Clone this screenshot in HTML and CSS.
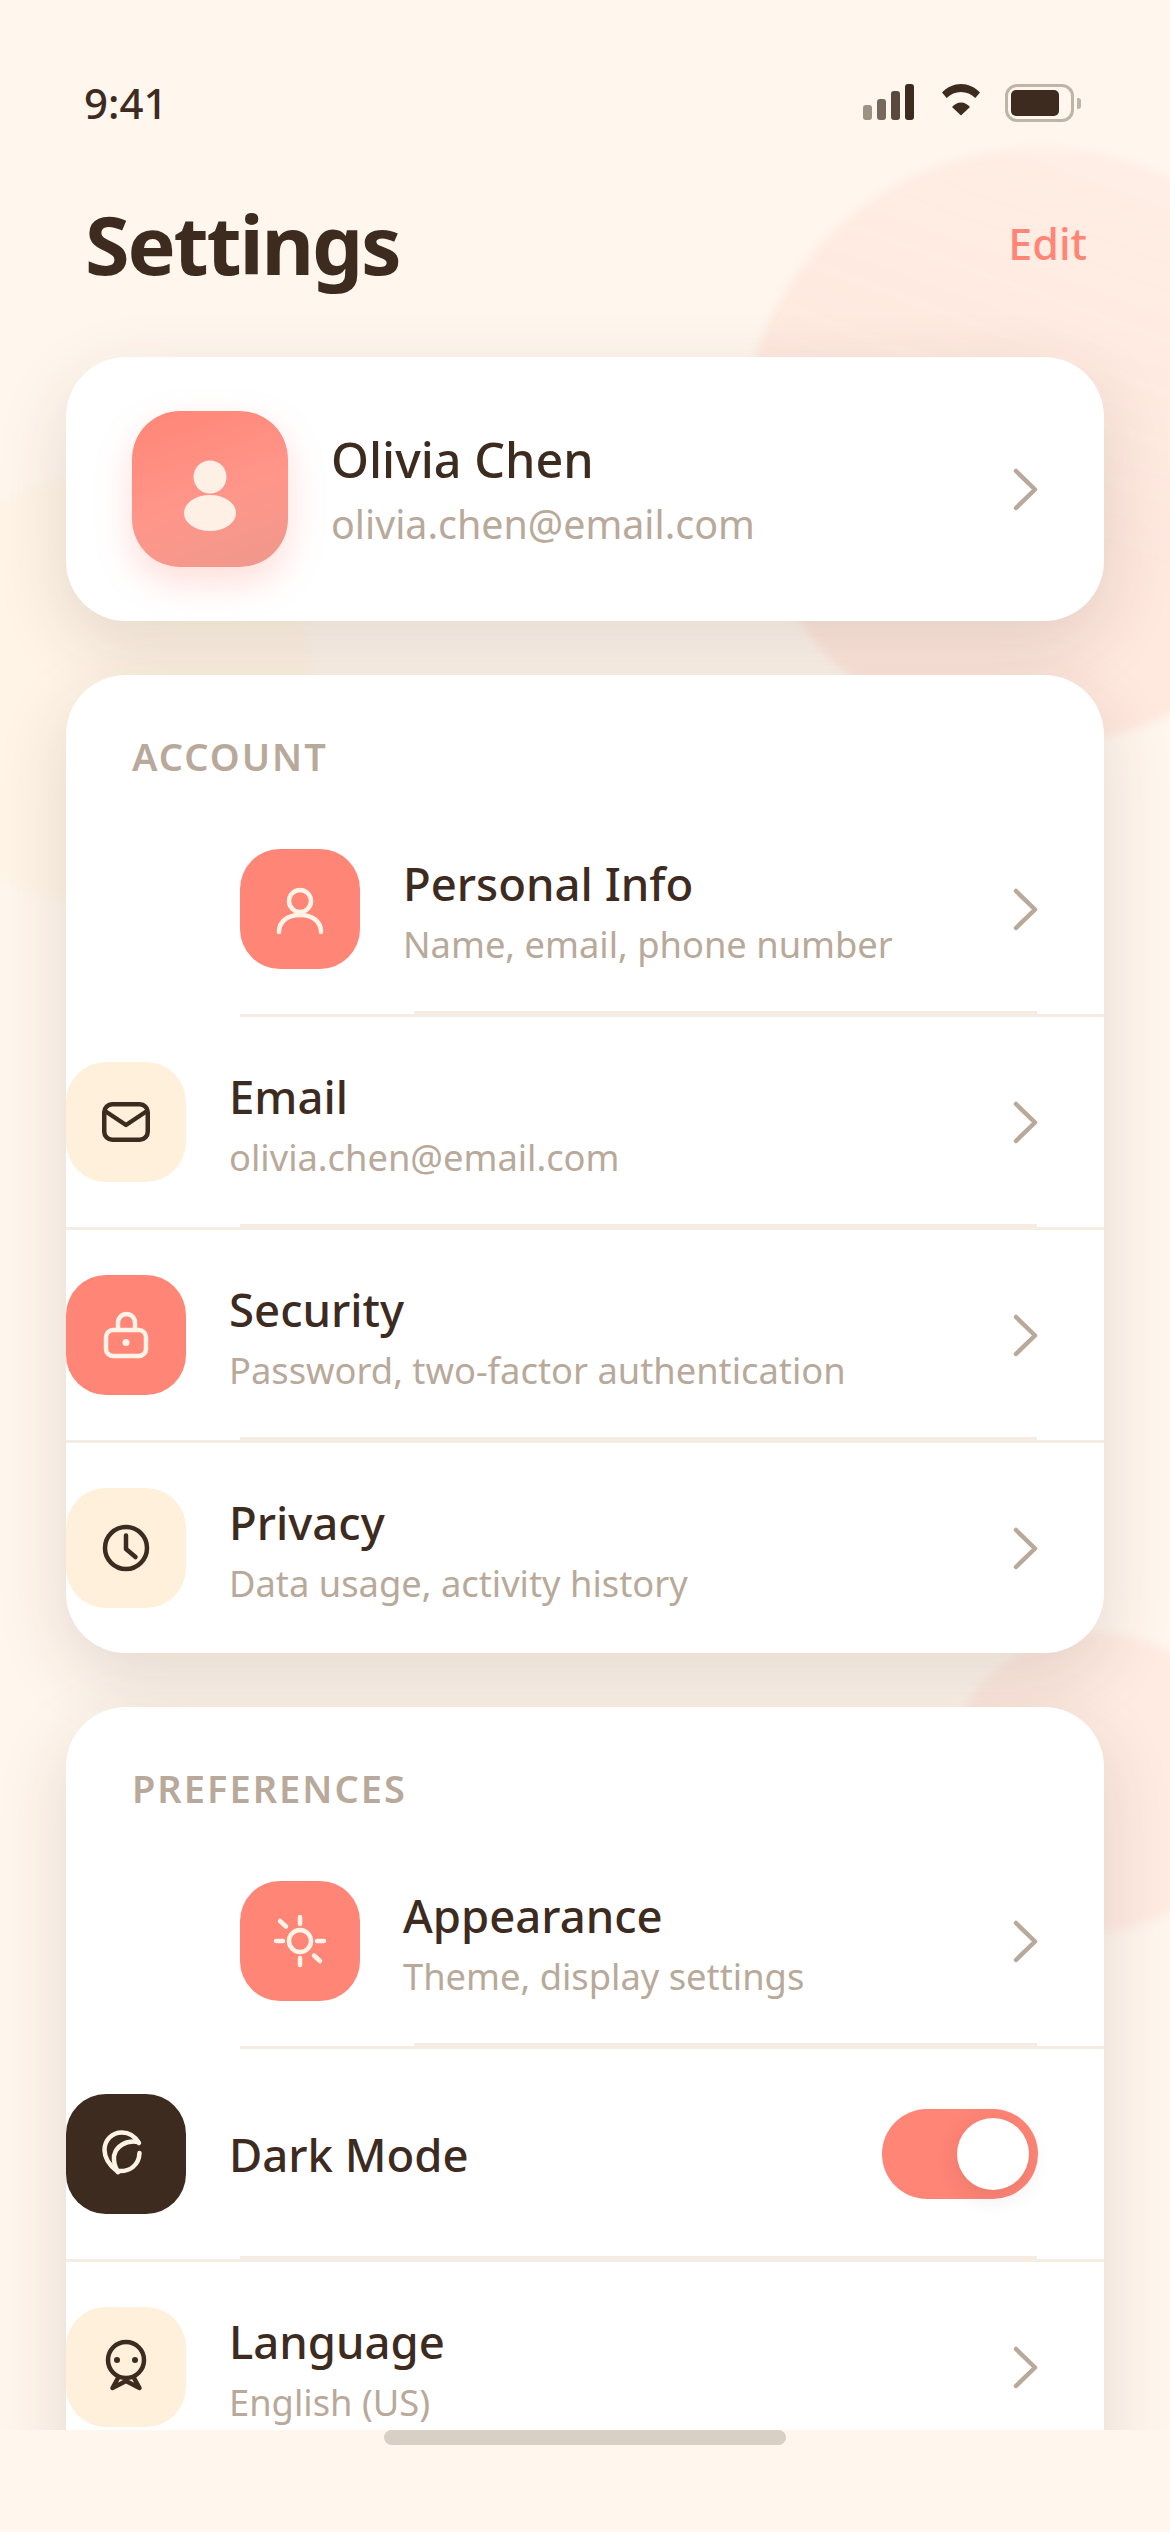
FILE: index.html
```html
<!DOCTYPE html>
<html lang="en">
<head>
<meta charset="utf-8">
<title>Settings</title>
<link rel="stylesheet" href="styles.css">
</head>
<body>
<div class="screen">
  <div class="blob blob-pink"></div>
  <div class="blob blob-yellow"></div>
  <div class="blob blob-pink-low"></div>

  <div class="scroll">
    <div class="status">
      <span class="time">9:41</span>
      <div class="status-icons">
        <div class="signal">
          <i class="bar bar1"></i><i class="bar bar2"></i><i class="bar bar3"></i><i class="bar bar4"></i>
        </div>
        <svg class="wifi" width="38" height="32" viewBox="0 0 38 32"><path d="M0 8.500C5.500 2.900 12 0 19 0s13.500 2.900 19 8.500l-4.700 5.600C29.300 10 24.500 8 19 8S8.700 10 4.700 14.100Z" fill="#3d2b1f"/><path d="M10 23C12.500 20.300 15.500 18.500 19 18.500S25.500 20.300 28 23L19 31.500Z" fill="#3d2b1f"/></svg>
        <div class="battery"><div class="battery-body"><div class="battery-fill"></div></div><div class="battery-cap"></div></div>
      </div>
    </div>

    <header class="head">
      <h1 class="page-title">Settings</h1>
      <span class="edit">Edit</span>
    </header>

    <section class="card profile">
      <div class="avatar">
        <svg width="156" height="156" viewBox="0 0 156 156"><circle cx="78" cy="66" r="16.500" fill="#fff0e6"/><ellipse cx="78" cy="102" rx="26" ry="18" fill="#fff0e6"/></svg>
      </div>
      <div class="texts">
        <div class="name">Olivia Chen</div>
        <div class="mail">olivia.chen@email.com</div>
      </div>
      <svg class="chev" width="27" height="43" viewBox="0 0 27 43"><path d="M4 3L23 21.500L4 40" /></svg>
    </section>

    <section class="card group">
      <h2 class="group-title">ACCOUNT</h2>
      <div class="row row-first">
        <div class="tile coral"><svg class="glyph light" width="72" height="72" viewBox="0 0 72 72"><circle cx="36" cy="28" r="11"/><path d="M15 59C15 48 24 42 36 42S57 48 57 59"/></svg></div>
        <div class="texts"><div class="title">Personal Info</div><div class="sub">Name, email, phone number</div></div>
        <svg class="chev" width="27" height="43" viewBox="0 0 27 43"><path d="M4 3L23 21.500L4 40" /></svg>
      </div>
      <div class="row">
        <div class="tile cream"><svg class="glyph dark" width="72" height="72" viewBox="0 0 72 72"><rect x="14.250" y="18.250" width="43.500" height="35.500" rx="8"/><path d="M15 25L36 39L57 25"/></svg></div>
        <div class="texts"><div class="title">Email</div><div class="sub">olivia.chen@email.com</div></div>
        <svg class="chev" width="27" height="43" viewBox="0 0 27 43"><path d="M4 3L23 21.500L4 40" /></svg>
      </div>
      <div class="row">
        <div class="tile coral"><svg class="glyph light" width="72" height="72" viewBox="0 0 72 72"><rect x="16" y="31" width="40" height="26" rx="7"/><path d="M28 31V23.500A8.500 8.500 0 0 1 45 23.500V31"/><circle class="dot" cx="36" cy="43.500" r="3.500"/></svg></div>
        <div class="texts"><div class="title">Security</div><div class="sub">Password, two-factor authentication</div></div>
        <svg class="chev" width="27" height="43" viewBox="0 0 27 43"><path d="M4 3L23 21.500L4 40" /></svg>
      </div>
      <div class="row row-last">
        <div class="tile cream"><svg class="glyph dark" width="72" height="72" viewBox="0 0 72 72"><circle cx="36" cy="36" r="21"/><path d="M36 23.500V37L45.500 45"/></svg></div>
        <div class="texts"><div class="title">Privacy</div><div class="sub">Data usage, activity history</div></div>
        <svg class="chev" width="27" height="43" viewBox="0 0 27 43"><path d="M4 3L23 21.500L4 40" /></svg>
      </div>
    </section>

    <section class="card group group-clipped">
      <h2 class="group-title">PREFERENCES</h2>
      <div class="row row-first">
        <div class="tile coral"><svg class="glyph light" width="72" height="72" viewBox="0 0 72 72"><circle cx="36" cy="36" r="11"/><path d="M36 12V19M36 53V60M12 36H19M53 36H60M16 16L22 21.500M50 50.500L56 56"/></svg></div>
        <div class="texts"><div class="title">Appearance</div><div class="sub">Theme, display settings</div></div>
        <svg class="chev" width="27" height="43" viewBox="0 0 27 43"><path d="M4 3L23 21.500L4 40" /></svg>
      </div>
      <div class="row">
        <div class="tile ink"><svg class="glyph light" width="72" height="72" viewBox="0 0 72 72"><path d="M49 25C44 17 38 14.500 32 14.500C22 14.500 14.500 22 14.500 32C14.500 41 20 48 28 54"/><path d="M48 24C36 22 26 28 24 38C23.500 44 25 49 28 54"/><path d="M28 53C40 54 49 47 49.500 35"/></svg></div>
        <div class="texts"><div class="title">Dark Mode</div></div>
        <div class="toggle"><div class="knob"></div></div>
      </div>
      <div class="row row-last">
        <div class="tile cream"><svg class="glyph dark" width="72" height="72" viewBox="0 0 72 72"><circle cx="36" cy="29" r="18"/><circle class="dot" cx="27" cy="29" r="3"/><circle class="dot" cx="45" cy="29" r="3"/><path d="M28 47L22.500 57L36 50L49.500 57L44 47"/></svg></div>
        <div class="texts"><div class="title">Language</div><div class="sub">English (US)</div></div>
        <svg class="chev" width="27" height="43" viewBox="0 0 27 43"><path d="M4 3L23 21.500L4 40" /></svg>
      </div>
    </section>
  </div>

  <footer class="home-bar"><div class="home-indicator"></div></footer>
</div>
</body>
</html>
```

FILE: styles.css
```css
* { box-sizing: border-box; }
html, body { margin: 0; padding: 0; }
body { font-family: "Noto Sans", sans-serif; color: #3d2b1f; }

.screen {
  position: relative;
  width: 1170px;
  height: 2532px;
  overflow: hidden;
  background: #fff6ed;
  display: flex;
  flex-direction: column;
}

.blob { position: absolute; border-radius: 50%; filter: blur(4px); }
.blob-pink { width: 596px; height: 596px; left: 742px; top: 148px; background: linear-gradient(200deg, rgba(255, 133, 118, 0.05), rgba(255, 133, 118, 0.12) 60%); }
.blob-yellow { width: 424px; height: 424px; left: -112px; top: 478px; background: rgba(255, 236, 190, 0.16); }
.blob-pink-low { width: 300px; height: 300px; left: 945px; top: 1632px; background: rgba(255, 133, 118, 0.09); }

.scroll { position: relative; flex: 1; min-height: 0; overflow: hidden; padding-top: 84px; }

.status { height: 38px; padding: 0 89px 0 84px; display: flex; justify-content: space-between; align-items: center; }
.time { font-size: 42px; font-weight: 500; line-height: 38px; }
.status-icons { display: flex; align-items: flex-start; gap: 28px; height: 38px; }
.signal { display: flex; align-items: flex-end; gap: 5px; height: 36px; }
.bar { display: block; width: 9px; border-radius: 3px; background: #3d2b1f; }
.bar1 { height: 15px; opacity: 0.5; }
.bar2 { height: 21px; opacity: 0.7; }
.bar3 { height: 29px; opacity: 0.85; }
.bar4 { height: 36px; }
.wifi { display: block; }
.battery { display: flex; align-items: center; gap: 3px; height: 38px; margin-left: -3px; }
.battery-body { width: 69px; height: 38px; border: 3px solid #bfb4a8; border-radius: 12px; padding: 3px; }
.battery-fill { width: 48px; height: 26px; border-radius: 5px; background: #3d2b1f; }
.battery-cap { width: 4px; height: 11px; border-radius: 0 3px 3px 0; background: #bfb4a8; }

.head { height: 235px; padding: 8px 83px 0 85px; display: flex; justify-content: space-between; align-items: center; }
.page-title { margin: 0; font-size: 81px; font-weight: 700; line-height: 100px; letter-spacing: -2.200px; }
.edit { font-size: 43px; font-weight: 500; color: #ff8576; }

.card {
  position: relative;
  margin: 0 66px 54px;
  background: #fff;
  border-radius: 60px;
  box-shadow: 0 24px 72px rgba(61, 43, 31, 0.14);
}

.profile { height: 264px; padding: 54px 67px 54px 66px; display: flex; align-items: center; gap: 43px; margin-bottom: 54px; }
.avatar {
  width: 156px;
  height: 156px;
  flex: none;
  border-radius: 48px;
  background: linear-gradient(160deg, #ff8576 0%, #ff968a 55%, #ef988c 100%);
  box-shadow: 0 15px 36px rgba(255, 133, 118, 0.28);
}
.avatar svg { display: block; }
.texts { flex: 1; min-width: 0; }
.name { font-size: 48.500px; font-weight: 500; line-height: 60px; }
.mail { font-size: 39.400px; line-height: 50px; margin-top: 10px; color: #b8a99a; }
.chev { display: block; flex: none; margin-right: -2px; fill: none; stroke: #b8a99a; stroke-width: 4.500; stroke-linecap: round; stroke-linejoin: round; }

.group-title { margin: 0; height: 129px; padding: 58px 66px 0; font-size: 38px; line-height: 46px; font-weight: 600; letter-spacing: 2px; color: #b8a99a; }

.row {
  position: relative;
  display: flex;
  align-items: center;
  gap: 43px;
  padding: 45px 67px 45px 0;
  border-bottom: 3px solid #f5ede4;
}
.row::after {
  content: "";
  position: absolute;
  left: 174px;
  right: 67px;
  bottom: -3px;
  height: 6px;
  background: #f5ede4;
}
.row-first { margin-left: 174px; }
.row-last { border-bottom: 0; }
.row-last::after { display: none; }
.group-clipped { padding-bottom: 60px; }

.tile { width: 120px; height: 120px; flex: none; border-radius: 40px; display: flex; align-items: center; justify-content: center; }
.coral { background: #ff8576; }
.cream { background: #fff0dc; }
.ink { background: #3d2b1f; }

.glyph { display: block; fill: none; stroke-width: 4.500; stroke-linecap: round; stroke-linejoin: round; }
.glyph.light { stroke: #fff3e8; }
.glyph.dark { stroke: #3d2b1f; }
.glyph .dot { stroke: none; }
.glyph.light .dot { fill: #fff3e8; }
.glyph.dark .dot { fill: #3d2b1f; }

.title { font-size: 45.500px; font-weight: 500; line-height: 56px; }
.sub { font-size: 36.300px; line-height: 46px; margin-top: 9.500px; margin-bottom: -3.500px; color: #b8a99a; }

.toggle { width: 156px; height: 90px; flex: none; margin-right: -1px; padding: 9px; border-radius: 45px; background: #ff8576; display: flex; justify-content: flex-end; }
.knob { width: 72px; height: 72px; border-radius: 50%; background: #fff; box-shadow: 0 6px 24px rgba(61, 43, 31, 0.12); }

.home-bar { position: relative; flex: none; height: 102px; background: #fff6ed; display: flex; justify-content: center; align-items: flex-start; }
.home-indicator { width: 402px; height: 15px; border-radius: 8px; background: #d8cfc5; }
```
